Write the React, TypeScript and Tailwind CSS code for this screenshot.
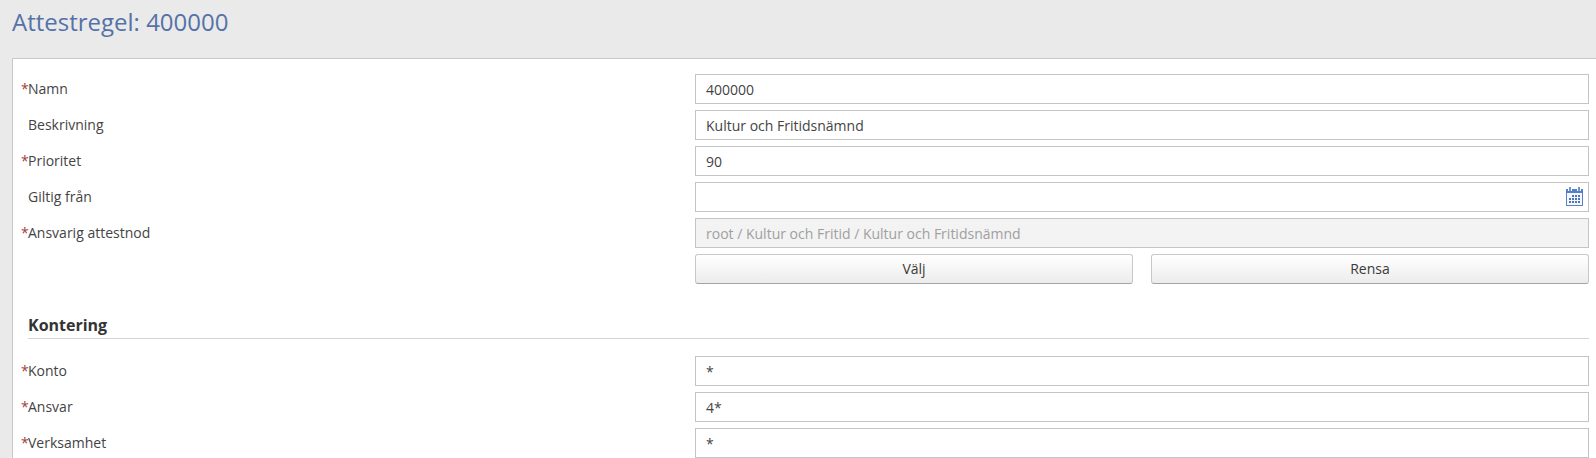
import React from "react";

function CalendarIcon() {
  const dots: [number, number][] = [
    [6, 8], [9, 8], [12, 8],
    [3, 11], [6, 11], [9, 11], [12, 11],
    [3, 14], [6, 14], [9, 14], [12, 14],
  ];
  return (
    <svg width="17" height="19" viewBox="0 0 17 19" shapeRendering="crispEdges" className="mb-0.5">
      <rect x="0.5" y="2.5" width="16" height="16" fill="#f4f8fe" stroke="#5b82c4" />
      <rect x="0" y="2" width="17" height="4" fill="#5580c6" />
      <rect x="2" y="0" width="4" height="4" fill="#fff" />
      <rect x="11" y="0" width="4" height="4" fill="#fff" />
      <rect x="3" y="0" width="2" height="4" fill="#6f94d0" />
      <rect x="12" y="0" width="2" height="4" fill="#6f94d0" />
      {dots.map(([x, y]) => (
        <rect key={`${x}-${y}`} x={x} y={y} width="2" height="2" fill="#4f74b8" />
      ))}
    </svg>
  );
}

function Row({ label, required, children }: { label: string; required?: boolean; children: React.ReactNode }) {
  return (
    <div className="flex h-[30px]">
      <div className="flex w-[682px] shrink-0 pl-2 text-[#444] leading-[30px]">
        <span className="w-[7px] shrink-0 text-[#a04040]">{required ? "*" : ""}</span>
        <span>{label}</span>
      </div>
      <div className="flex w-[894px] shrink-0">{children}</div>
    </div>
  );
}

function Field({ value, disabled, icon }: { value?: string; disabled?: boolean; icon?: React.ReactNode }) {
  return (
    <div
      className={`flex h-[30px] w-full items-center justify-between border border-[#c3c4c6] pl-2.5 pr-[5px] ${
        disabled ? "bg-[#f3f3f3] text-[#a0a0a0]" : "bg-white text-[#444]"
      }`}
    >
      <span className="pt-0.5 leading-[26px]">{value}</span>
      {icon}
    </div>
  );
}

function Button({ children }: { children: React.ReactNode }) {
  return (
    <button className="h-[30px] flex-1 rounded-[3px] border border-[#c8c8c8] border-b-[#a4a4a4] bg-linear-to-b from-white to-[#ececec] leading-[28px] text-[#3a3a3a]">
      {children}
    </button>
  );
}

export default function App() {
  return (
    <div className="h-[458px] w-full overflow-hidden bg-[#eaeaea] pl-3 font-['Open_Sans',sans-serif] text-[14px]">
      <h1 className="h-[58px] pt-[5px] text-[24px] leading-[33px] text-[#5572a8]">Attestregel: 400000</h1>
      <main className="h-[420px] border-l border-t border-[#c9c9c9] bg-white pt-[15px]">
        <div className="flex flex-col gap-1.5">
          <Row label="Namn" required><Field value="400000" /></Row>
          <Row label="Beskrivning"><Field value="Kultur och Fritidsnämnd" /></Row>
          <Row label="Prioritet" required><Field value="90" /></Row>
          <Row label="Giltig från"><Field icon={<CalendarIcon />} /></Row>
          <Row label="Ansvarig attestnod" required>
            <Field value="root / Kultur och Fritid / Kultur och Fritidsnämnd" disabled />
          </Row>
          <Row label="">
            <div className="flex w-full gap-[18px]">
              <Button>Välj</Button>
              <Button>Rensa</Button>
            </div>
          </Row>
        </div>
        <h2 className="ml-[15px] mt-[29px] h-[26px] w-[1561px] border-b border-[#d3d3d3] text-[16px] font-bold leading-[24px] text-[#333]">
          Kontering
        </h2>
        <div className="mt-[17px] flex flex-col gap-1.5">
          <Row label="Konto" required><Field value="*" /></Row>
          <Row label="Ansvar" required><Field value="4*" /></Row>
          <Row label="Verksamhet" required><Field value="*" /></Row>
        </div>
      </main>
    </div>
  );
}
